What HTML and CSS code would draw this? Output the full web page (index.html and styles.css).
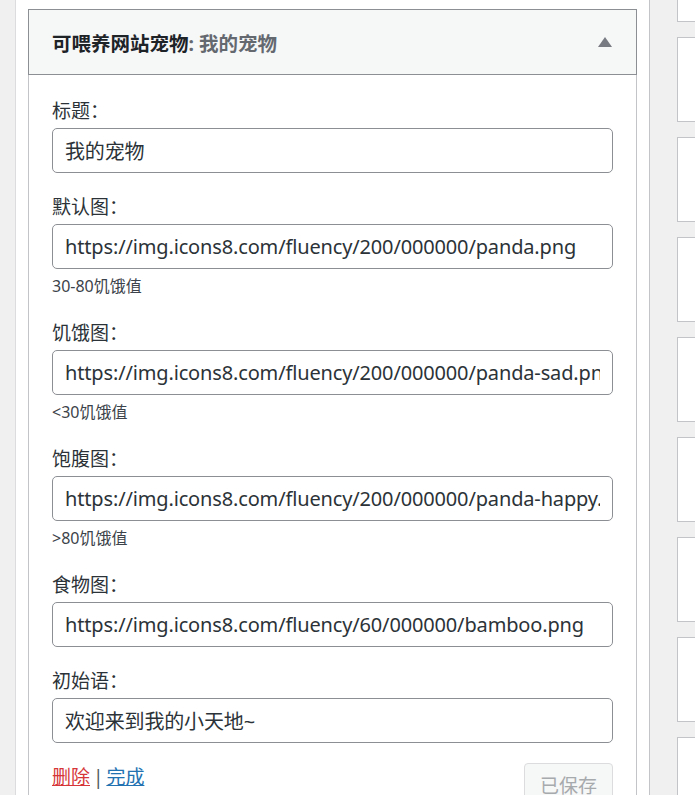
FILE: index.html
```
<!DOCTYPE html>
<html>
<head>
  <title>Widget - 可喂养网站宠物</title>
  <link rel="stylesheet" href="styles.css">
</head>
<body>
  <div class="screen">
    <div class="panel">
      <div class="widget">
        <div class="widget-top">
          <h3 class="widget-title">可喂养网站宠物<span class="in-widget-title">: 我的宠物</span></h3>
          <span class="toggle"></span>
        </div>
        <div class="widget-inside">
          <div class="field">
            <label>标题：</label>
            <input type="text" value="我的宠物">
          </div>
          <div class="field">
            <label>默认图：</label>
            <input type="text" value="https://img.icons8.com/fluency/200/000000/panda.png">
            <div class="desc">30-80饥饿值</div>
          </div>
          <div class="field">
            <label>饥饿图：</label>
            <input type="text" value="https://img.icons8.com/fluency/200/000000/panda-sad.png">
            <div class="desc">&lt;30饥饿值</div>
          </div>
          <div class="field">
            <label>饱腹图：</label>
            <input type="text" value="https://img.icons8.com/fluency/200/000000/panda-happy.png">
            <div class="desc">&gt;80饥饿值</div>
          </div>
          <div class="field">
            <label>食物图：</label>
            <input type="text" value="https://img.icons8.com/fluency/60/000000/bamboo.png">
          </div>
          <div class="field">
            <label>初始语：</label>
            <input type="text" value="欢迎来到我的小天地~">
          </div>
          <div class="widget-actions">
            <div class="links"><a href="#" class="delete">删除</a> | <a href="#" class="done">完成</a></div>
            <button class="save" disabled>已保存</button>
          </div>
        </div>
      </div>
    </div>
    <div class="side">
      <div class="card first"></div>
      <div class="card"></div>
      <div class="card"></div>
      <div class="card"></div>
      <div class="card"></div>
      <div class="card"></div>
      <div class="card"></div>
      <div class="card"></div>
      <div class="card"></div>
    </div>
  </div>
</body>
</html>
```

FILE: styles.css
```
body {
  margin: 0;
  overflow: hidden;
  background-color: #f0f0f1;
  font-family: "Noto Sans", "Noto Sans CJK SC", sans-serif;
  color: #2c3338;
}
.screen {
  display: flex;
  height: 100vh;
  padding-left: 15px;
}
.panel {
  width: 635px;
  flex-shrink: 0;
  box-sizing: border-box;
  background-color: #fff;
  border-left: 1px solid #dcdcde;
  border-right: 1px solid #c3c4c7;
  padding: 9px 12px 0;
}
.widget-top {
  height: 66px;
  box-sizing: border-box;
  display: flex;
  align-items: center;
  justify-content: space-between;
  background-color: #f6f7f7;
  border: 1px solid #8c8f94;
  padding: 0 24px 0 23px;
}
.widget-title {
  margin: 0;
  font-size: 19.5px;
  font-weight: 700;
  color: #1d2327;
}
.in-widget-title {
  color: #646970;
}
.toggle {
  width: 0;
  height: 0;
  border-left: 7px solid transparent;
  border-right: 7px solid transparent;
  border-bottom: 10px solid #787c82;
}
.widget-inside {
  border: 1px solid #c3c4c7;
  border-top: none;
  padding: 23px 23px 0;
  height: 800px;
}
.field {
  margin-bottom: 21px;
}
.field label {
  display: block;
  font-size: 19px;
  line-height: 26px;
  margin-bottom: 4px;
  color: #2c3338;
}
.field input {
  display: block;
  width: 100%;
  height: 45px;
  box-sizing: border-box;
  border: 1px solid #8c8f94;
  border-radius: 5px;
  padding: 0 12px;
  font-family: "Noto Sans", "Noto Sans CJK SC", sans-serif;
  font-size: 20px;
  letter-spacing: -0.15px;
  color: #2c3338;
  background-color: #fff;
}
.desc {
  font-size: 16px;
  line-height: 22px;
  margin-top: 6px;
  padding-bottom: 2px;
  color: #3c434a;
}
.widget-actions {
  display: flex;
  justify-content: space-between;
  align-items: flex-start;
}
.links {
  font-size: 19px;
  line-height: 26px;
  word-spacing: -2px;
  color: #50575e;
}
.links a {
  text-decoration: underline;
}
.delete {
  color: #d63638;
}
.done {
  color: #2271b1;
}
.save {
  height: 44px;
  padding: 0 15px;
  margin-top: -1px;
  font-family: "Noto Sans", "Noto Sans CJK SC", sans-serif;
  font-size: 19px;
  color: #a7aaad;
  background-color: #f6f7f7;
  border: 1px solid #dcdcde;
  border-radius: 4px;
}
.side {
  flex: 1;
  display: flex;
  flex-direction: column;
  gap: 15px;
  padding-left: 27px;
}
.card {
  height: 85px;
  flex-shrink: 0;
  box-sizing: border-box;
  background-color: #fff;
  border: 1px solid #c3c4c7;
  border-right: none;
}
.card.first {
  height: 22px;
  border-top: none;
}
```
